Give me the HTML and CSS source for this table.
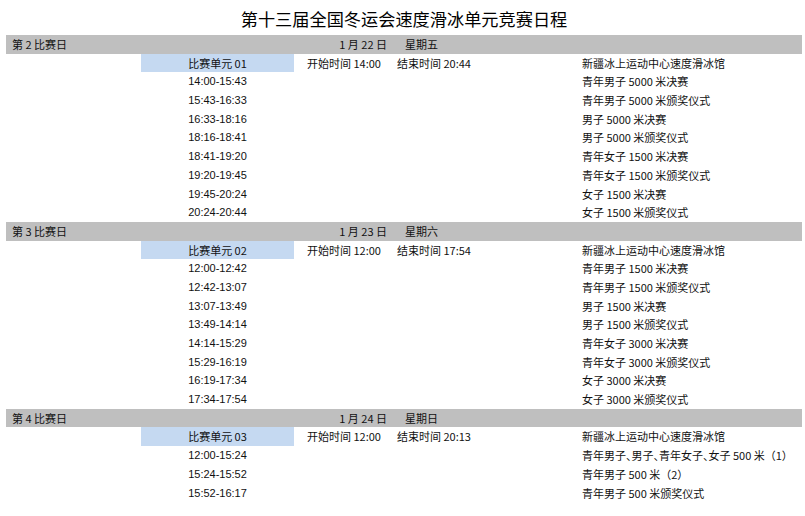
FILE: index.html
```html
<!DOCTYPE html>
<html lang="zh-CN">
<head>
<meta charset="utf-8">
<title>第十三届全国冬运会速度滑冰单元竞赛日程</title>
<link rel="stylesheet" href="styles.css">
</head>
<body>
<div class="sheet">
  <h1 class="title">第十三届全国冬运会速度滑冰单元竞赛日程</h1>

  <div class="row day">
    <div class="c1">第 2 比赛日</div><div class="c2"></div>
    <div class="c3 date">1 月 22 日</div><div class="c4 week">星期五</div><div class="c5"></div>
  </div>
  <div class="row">
    <div class="c1"></div><div class="c2 unit">比赛单元 01</div>
    <div class="c3 start">开始时间 14:00</div><div class="c4 end">结束时间 20:44</div><div class="c5">新疆冰上运动中心速度滑冰馆</div>
  </div>
  <div class="row"><div class="c1"></div><div class="c2 time">14:00-15:43</div><div class="c3"></div><div class="c4"></div><div class="c5">青年男子 5000 米决赛</div></div>
  <div class="row"><div class="c1"></div><div class="c2 time">15:43-16:33</div><div class="c3"></div><div class="c4"></div><div class="c5">青年男子 5000 米颁奖仪式</div></div>
  <div class="row"><div class="c1"></div><div class="c2 time">16:33-18:16</div><div class="c3"></div><div class="c4"></div><div class="c5">男子 5000 米决赛</div></div>
  <div class="row"><div class="c1"></div><div class="c2 time">18:16-18:41</div><div class="c3"></div><div class="c4"></div><div class="c5">男子 5000 米颁奖仪式</div></div>
  <div class="row"><div class="c1"></div><div class="c2 time">18:41-19:20</div><div class="c3"></div><div class="c4"></div><div class="c5">青年女子 1500 米决赛</div></div>
  <div class="row"><div class="c1"></div><div class="c2 time">19:20-19:45</div><div class="c3"></div><div class="c4"></div><div class="c5">青年女子 1500 米颁奖仪式</div></div>
  <div class="row"><div class="c1"></div><div class="c2 time">19:45-20:24</div><div class="c3"></div><div class="c4"></div><div class="c5">女子 1500 米决赛</div></div>
  <div class="row"><div class="c1"></div><div class="c2 time">20:24-20:44</div><div class="c3"></div><div class="c4"></div><div class="c5">女子 1500 米颁奖仪式</div></div>

  <div class="row day">
    <div class="c1">第 3 比赛日</div><div class="c2"></div>
    <div class="c3 date">1 月 23 日</div><div class="c4 week">星期六</div><div class="c5"></div>
  </div>
  <div class="row">
    <div class="c1"></div><div class="c2 unit">比赛单元 02</div>
    <div class="c3 start">开始时间 12:00</div><div class="c4 end">结束时间 17:54</div><div class="c5">新疆冰上运动中心速度滑冰馆</div>
  </div>
  <div class="row"><div class="c1"></div><div class="c2 time">12:00-12:42</div><div class="c3"></div><div class="c4"></div><div class="c5">青年男子 1500 米决赛</div></div>
  <div class="row"><div class="c1"></div><div class="c2 time">12:42-13:07</div><div class="c3"></div><div class="c4"></div><div class="c5">青年男子 1500 米颁奖仪式</div></div>
  <div class="row"><div class="c1"></div><div class="c2 time">13:07-13:49</div><div class="c3"></div><div class="c4"></div><div class="c5">男子 1500 米决赛</div></div>
  <div class="row"><div class="c1"></div><div class="c2 time">13:49-14:14</div><div class="c3"></div><div class="c4"></div><div class="c5">男子 1500 米颁奖仪式</div></div>
  <div class="row"><div class="c1"></div><div class="c2 time">14:14-15:29</div><div class="c3"></div><div class="c4"></div><div class="c5">青年女子 3000 米决赛</div></div>
  <div class="row"><div class="c1"></div><div class="c2 time">15:29-16:19</div><div class="c3"></div><div class="c4"></div><div class="c5">青年女子 3000 米颁奖仪式</div></div>
  <div class="row"><div class="c1"></div><div class="c2 time">16:19-17:34</div><div class="c3"></div><div class="c4"></div><div class="c5">女子 3000 米决赛</div></div>
  <div class="row"><div class="c1"></div><div class="c2 time">17:34-17:54</div><div class="c3"></div><div class="c4"></div><div class="c5">女子 3000 米颁奖仪式</div></div>

  <div class="row day">
    <div class="c1">第 4 比赛日</div><div class="c2"></div>
    <div class="c3 date">1 月 24 日</div><div class="c4 week">星期日</div><div class="c5"></div>
  </div>
  <div class="row">
    <div class="c1"></div><div class="c2 unit">比赛单元 03</div>
    <div class="c3 start">开始时间 12:00</div><div class="c4 end">结束时间 20:13</div><div class="c5">新疆冰上运动中心速度滑冰馆</div>
  </div>
  <div class="row"><div class="c1"></div><div class="c2 time">12:00-15:24</div><div class="c3"></div><div class="c4"></div><div class="c5">青年男子<span class="pn">、</span>男子<span class="pn">、</span>青年女子<span class="pn">、</span>女子 500 米（1）</div></div>
  <div class="row"><div class="c1"></div><div class="c2 time">15:24-15:52</div><div class="c3"></div><div class="c4"></div><div class="c5">青年男子 500 米（2）</div></div>
  <div class="row"><div class="c1"></div><div class="c2 time">15:52-16:17</div><div class="c3"></div><div class="c4"></div><div class="c5">青年男子 500 米颁奖仪式</div></div>
</div>
</body>
</html>
```

FILE: styles.css
```css
html, body {
  margin: 0;
  padding: 0;
  background: #ffffff;
}

body {
  font-family: "Noto Sans CJK SC", "Liberation Sans", sans-serif;
  font-size: 11px;
  color: #111111;
}

.sheet {
  width: 796px;
  margin-left: 6px;
}

.title {
  margin: 0;
  height: 35px;
  line-height: 38px;
  text-align: center;
  font-size: 17.2px;
  font-weight: 400;
  color: #000;
}

.row {
  display: grid;
  grid-template-columns: 135px 153px 98px 190px 1fr;
  height: 18.7px;
  line-height: 18.7px;
  white-space: nowrap;
}

.day {
  background: #bfbfbf;
}

.day .c1 {
  padding-left: 6px;
}

.date {
  text-align: right;
  padding-right: 5px;
}

.week {
  padding-left: 13px;
}

.unit {
  background: #c5d9f1;
  text-align: center;
}

.time {
  text-align: center;
  font-family: "Liberation Sans", "Noto Sans CJK SC", sans-serif;
}

.start {
  padding-left: 13px;
}

.end {
  padding-left: 5px;
}

.pn {
  font-feature-settings: "palt";
}
```
